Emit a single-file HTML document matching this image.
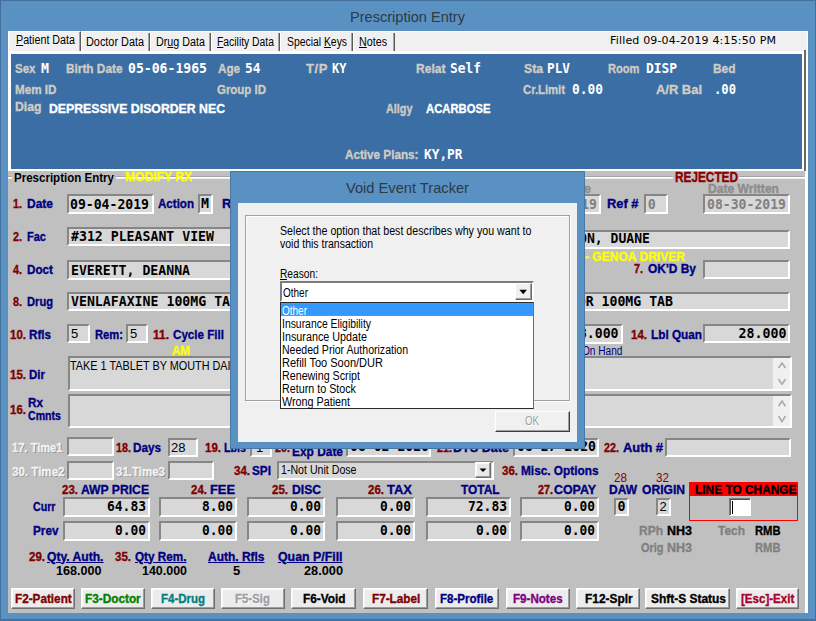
<!DOCTYPE html>
<html><head><meta charset="utf-8"><title>Prescription Entry</title>
<style>
html,body{margin:0;padding:0;}
body{width:816px;height:621px;overflow:hidden;background:#5a91c3;}
#win{position:relative;width:816px;height:621px;overflow:hidden;background:#5a91c3;}
#win div,#win span{position:absolute;box-sizing:border-box;white-space:pre;}
.fld{background:#d8d8d8;border:2px solid;border-color:#868686 #fff #fff #868686;}
.btn{background:#ececec;border:1px solid;border-color:#fff #707070 #707070 #fff;box-shadow:inset -1px -1px 0 #9c9c9c, inset 1px 1px 0 #fafafa;}
u{text-decoration:underline;}

</style></head><body>
<div id="win">
<div class="" style="left:0px;top:0px;width:816px;height:621px;border:solid #44719c;border-width:1px 1px 2px 1px;background:#5a91c3;"></div>
<div class="" style="left:8px;top:30.6px;width:800px;height:582px;background:#c0c0c0;"></div>
<div class="" style="left:804.8px;top:31px;width:3.4px;height:582px;background:#fff;"></div>
<div class="" style="left:8px;top:30.6px;width:800px;height:23.6px;background:#f0f0f0;border-top:1px solid #fff;border-left:1.3px solid #fff;border-right:1px solid #fff;"></div>
<div class="" style="left:8px;top:51px;width:797.8px;height:3.2px;background:#fff;"></div>
<div class="" style="left:8px;top:31px;width:73px;height:20px;background:#f0f0f0;border-left:1px solid #fff;border-top:1px solid #fff;border-right:1px solid #5a5a5a;box-shadow:inset -1px 0 0 #a4a4a4;"></div>
<div class="" style="left:81px;top:33px;width:69px;height:17.5px;border-right:1px solid #5a5a5a;box-shadow:inset -1px 0 0 #a4a4a4;border-left:1px solid #fff;"></div>
<div class="" style="left:150px;top:33px;width:61px;height:17.5px;border-right:1px solid #5a5a5a;box-shadow:inset -1px 0 0 #a4a4a4;border-left:1px solid #fff;"></div>
<div class="" style="left:211px;top:33px;width:69px;height:17.5px;border-right:1px solid #5a5a5a;box-shadow:inset -1px 0 0 #a4a4a4;border-left:1px solid #fff;"></div>
<div class="" style="left:280px;top:33px;width:73px;height:17.5px;border-right:1px solid #5a5a5a;box-shadow:inset -1px 0 0 #a4a4a4;border-left:1px solid #fff;"></div>
<div class="" style="left:353px;top:33px;width:42px;height:17.5px;border-right:1px solid #5a5a5a;box-shadow:inset -1px 0 0 #a4a4a4;border-left:1px solid #fff;"></div>
<div class="" style="left:8px;top:54.2px;width:796.4px;height:116.8px;background:#fff;"></div>
<div class="" style="left:11.3px;top:54.2px;width:790.8px;height:114.5px;background:#3a6ea5;"></div>
<div class="" style="left:804.4px;top:50px;width:1.4px;height:121px;background:#696969;"></div>
<div class="" style="left:8px;top:176px;width:796.4px;height:1px;background:#a4a4a4;"></div>
<div class="" style="left:8px;top:177px;width:797.5px;height:1px;background:#fff;"></div>
<div class="" style="left:8px;top:178px;width:797.5px;height:1px;background:rgba(255,255,255,0.7);"></div>
<div class="" style="left:12px;top:175px;width:104px;height:5px;background:#c0c0c0;"></div>
<div class="" style="left:673px;top:175px;width:66px;height:5px;background:#c0c0c0;"></div>
<div class="fld" style="left:67px;top:194px;width:87px;height:19.5px;"></div>
<div class="fld" style="left:198px;top:194px;width:15px;height:19.5px;"></div>
<div class="fld" style="left:520px;top:194px;width:80.5px;height:20.0px;"></div>
<div class="fld" style="left:644.4px;top:194px;width:23.200000000000045px;height:20.0px;"></div>
<div class="fld" style="left:703px;top:194px;width:87px;height:19.5px;"></div>
<div class="fld" style="left:67px;top:227px;width:473px;height:19.0px;"></div>
<div class="fld" style="left:480px;top:229.5px;width:310px;height:19.0px;"></div>
<div class="fld" style="left:67px;top:260px;width:473px;height:19.5px;"></div>
<div class="fld" style="left:703px;top:260px;width:87px;height:18.5px;"></div>
<div class="fld" style="left:67px;top:292px;width:473px;height:18.5px;"></div>
<div class="fld" style="left:480px;top:292px;width:310px;height:19.0px;"></div>
<div class="fld" style="left:67px;top:323.5px;width:23px;height:19.5px;"></div>
<div class="fld" style="left:126px;top:323.5px;width:22px;height:19.5px;"></div>
<div class="fld" style="left:540px;top:323.8px;width:82.5px;height:20.0px;"></div>
<div class="fld" style="left:703px;top:323.5px;width:87px;height:19.5px;"></div>
<div class="fld" style="left:67.5px;top:356.3px;width:724.3px;height:34.69999999999999px;"></div>
<div class="" style="left:773px;top:358.3px;width:17px;height:30.9px;background:#f0f0f0;"></div>
<div class="fld" style="left:67.5px;top:394.3px;width:724.3px;height:33.69999999999999px;"></div>
<div class="" style="left:773px;top:396.3px;width:17px;height:29.9px;background:#f0f0f0;"></div>
<div class="" style="left:777.6px;top:362.1px;width:8.0px;height:7.099999999999966px;"><svg width="8.0" height="7.099999999999966" viewBox="0 0 8.0 7.099999999999966" style="position:absolute;left:0;top:0"><polyline points="0.5,6.099999999999966 4.0,1.0 7.5,6.099999999999966" fill="none" stroke="#adadad" stroke-width="1.7"/></svg></div>
<div class="" style="left:777.6px;top:378px;width:8.0px;height:7.399999999999977px;"><svg width="8.0" height="7.399999999999977" viewBox="0 0 8.0 7.399999999999977" style="position:absolute;left:0;top:0"><polyline points="0.5,1 4.0,6.399999999999977 7.5,1" fill="none" stroke="#adadad" stroke-width="1.7"/></svg></div>
<div class="" style="left:777.6px;top:400.2px;width:8.0px;height:7.400000000000034px;"><svg width="8.0" height="7.400000000000034" viewBox="0 0 8.0 7.400000000000034" style="position:absolute;left:0;top:0"><polyline points="0.5,6.400000000000034 4.0,1.0 7.5,6.400000000000034" fill="none" stroke="#adadad" stroke-width="1.7"/></svg></div>
<div class="" style="left:777.6px;top:415px;width:8.0px;height:7.5px;"><svg width="8.0" height="7.5" viewBox="0 0 8.0 7.5" style="position:absolute;left:0;top:0"><polyline points="0.5,1 4.0,6.5 7.5,1" fill="none" stroke="#adadad" stroke-width="1.7"/></svg></div>
<div class="fld" style="left:67px;top:437.3px;width:47px;height:19.19999999999999px;"></div>
<div class="fld" style="left:167.5px;top:438px;width:30.0px;height:19.0px;"></div>
<div class="fld" style="left:250px;top:438px;width:22px;height:19.0px;"></div>
<div class="fld" style="left:346px;top:438px;width:85px;height:19.0px;"></div>
<div class="fld" style="left:513px;top:438px;width:85.5px;height:19.0px;"></div>
<div class="fld" style="left:665px;top:438px;width:126px;height:19.0px;"></div>
<div class="fld" style="left:67px;top:460.7px;width:47px;height:19.30000000000001px;"></div>
<div class="fld" style="left:167.5px;top:460.7px;width:46.5px;height:19.30000000000001px;"></div>
<div class="fld" style="left:277px;top:460.5px;width:216.5px;height:19.5px;"></div>
<div class="btn" style="left:475px;top:462px;width:16px;height:16px;background:#e8e8e8;"><svg width="14" height="14" viewBox="0 0 14 14" style="position:absolute;left:0;top:0"><polygon points="3.5,5.5 10.5,5.5 7,9" fill="#000"/></svg></div>
<div class="fld" style="left:63px;top:497px;width:86.5px;height:19.5px;"></div>
<div class="fld" style="left:63px;top:521px;width:86.5px;height:19.5px;"></div>
<div class="fld" style="left:159px;top:497px;width:78px;height:19.5px;"></div>
<div class="fld" style="left:159px;top:521px;width:78px;height:19.5px;"></div>
<div class="fld" style="left:246.5px;top:497px;width:78.5px;height:19.5px;"></div>
<div class="fld" style="left:246.5px;top:521px;width:78.5px;height:19.5px;"></div>
<div class="fld" style="left:336px;top:497px;width:79px;height:19.5px;"></div>
<div class="fld" style="left:336px;top:521px;width:79px;height:19.5px;"></div>
<div class="fld" style="left:426px;top:497px;width:85px;height:19.5px;"></div>
<div class="fld" style="left:426px;top:521px;width:85px;height:19.5px;"></div>
<div class="fld" style="left:520px;top:497px;width:78.5px;height:19.5px;"></div>
<div class="fld" style="left:520px;top:521px;width:78.5px;height:19.5px;"></div>
<div class="fld" style="left:614px;top:497.5px;width:15px;height:18.5px;"></div>
<div class="fld" style="left:656px;top:497.5px;width:15px;height:18.5px;"></div>
<div class="" style="left:689px;top:482px;width:109px;height:38.5px;background:#c0c0c0;border:1px solid #ff0000;"></div>
<div class="" style="left:689px;top:482px;width:109px;height:13.5px;background:#ff0000;"></div>
<div class="" style="left:729px;top:498px;width:21.5px;height:18px;background:#fff;border:1px solid;border-color:#7a7a7a #fff #fff #7a7a7a;box-shadow:inset 1px 1px 0 #555;"></div>
<div class="" style="left:732px;top:501px;width:1px;height:13px;background:#000;"></div>
<div class="btn" style="left:10.9px;top:588px;width:64.4px;height:20.7px;"></div>
<div class="btn" style="left:80.9px;top:588px;width:64.4px;height:20.7px;"></div>
<div class="btn" style="left:151.1px;top:588px;width:63.70000000000001px;height:20.7px;"></div>
<div class="btn" style="left:221.1px;top:588px;width:64.4px;height:20.7px;"></div>
<div class="btn" style="left:291.4px;top:588px;width:64.70000000000002px;height:20.7px;"></div>
<div class="btn" style="left:362.9px;top:588px;width:64.9px;height:20.7px;"></div>
<div class="btn" style="left:434.7px;top:588px;width:64.1px;height:20.7px;"></div>
<div class="btn" style="left:506.09999999999997px;top:588px;width:63.70000000000001px;height:20.7px;"></div>
<div class="btn" style="left:576.1px;top:588px;width:64.4px;height:20.7px;"></div>
<div class="btn" style="left:645.1px;top:588px;width:85.4px;height:20.7px;"></div>
<div class="btn" style="left:736.1px;top:588px;width:63.4px;height:20.7px;"></div>
<div class="" style="left:230px;top:171px;width:355px;height:277.5px;z-index:10;background:#5a91c3;border:1px solid #4a78a6;"></div>
<div class="" style="left:238px;top:203px;width:339px;height:238.5px;z-index:10;background:#f0f0f0;"></div>
<div class="" style="left:244.5px;top:214.5px;width:325.5px;height:186.5px;z-index:10;border:1px solid #a0a0a0;box-shadow:1px 1px 0 #fff, inset 1px 1px 0 #fff;"></div>
<div class="" style="left:279.5px;top:279px;width:7px;height:1px;z-index:10;background:#000;"></div>
<div class="" style="left:279.5px;top:281.4px;width:254.2px;height:20.6px;z-index:10;background:#fff;border:2px solid;border-color:#7c7c7c #fff #fff #7c7c7c;"></div>
<div class="" style="left:515.1px;top:283.4px;width:16.6px;height:16.9px;z-index:10;background:#f0f0f0;border:1px solid;border-color:#fff #696969 #696969 #fff;box-shadow:inset -1px -1px 0 #a0a0a0;"><svg width="15" height="15" viewBox="0 0 15 15" style="position:absolute;left:0;top:0"><polygon points="3.4,5.8 11.0,5.8 7.2,10.3" fill="#000"/></svg></div>
<div class="" style="left:279.5px;top:302.2px;width:254.7px;height:107px;z-index:10;background:#fff;border:1px solid;border-color:#2a2a2a #6e6e6e #2a2a2a #2a2a2a;"></div>
<div class="" style="left:280.5px;top:303px;width:252.2px;height:12.8px;z-index:10;background:#3399ff;border:1px dotted #d08040;"></div>
<div class="" style="left:495px;top:410.5px;width:74.5px;height:21.5px;z-index:10;background:#f0f0f0;border:1px solid;border-color:#fff #404040 #404040 #fff;box-shadow:inset -1px -1px 0 #a0a0a0;"></div>
<span style="left:350px;top:6.5px;font:normal 15px/19px 'Liberation Sans', sans-serif;color:#2c3946;transform:scaleX(0.9715);transform-origin:0 0;">Prescription Entry</span>
<span style="left:15.5px;top:31.5px;font:normal 12px/16px 'Liberation Sans', sans-serif;color:#000;transform:scaleX(0.8933);transform-origin:0 0;"><u>P</u>atient Data</span>
<span style="left:86px;top:33.5px;font:normal 12px/16px 'Liberation Sans', sans-serif;color:#000;transform:scaleX(0.9058);transform-origin:0 0;">Doctor Data</span>
<span style="left:156px;top:33.5px;font:normal 12px/16px 'Liberation Sans', sans-serif;color:#000;transform:scaleX(0.8957);transform-origin:0 0;">Dr<u>u</u>g Data</span>
<span style="left:217px;top:33.5px;font:normal 12px/16px 'Liberation Sans', sans-serif;color:#000;transform:scaleX(0.8632);transform-origin:0 0;"><u>F</u>acility Data</span>
<span style="left:287px;top:33.5px;font:normal 12px/16px 'Liberation Sans', sans-serif;color:#000;transform:scaleX(0.8649);transform-origin:0 0;">Special <u>K</u>eys</span>
<span style="left:359px;top:33.5px;font:normal 12px/16px 'Liberation Sans', sans-serif;color:#000;transform:scaleX(0.8929);transform-origin:0 0;"><u>N</u>otes</span>
<span style="left:610px;top:33.0px;font:normal 11px/15px 'DejaVu Sans', 'Liberation Sans', sans-serif;color:#000;letter-spacing:0.17px;">Filled 09-04-2019 4:15:50 PM</span>
<span style="left:14.5px;top:59.5px;font:bold 13px/17px 'Liberation Sans', sans-serif;color:#d0ccc4;transform:scaleX(0.8859);transform-origin:0 0;-webkit-text-stroke:0.35px;">Sex</span>
<span style="left:41px;top:59.5px;font:bold 13.29px/17px 'DejaVu Sans Mono', 'Liberation Mono', monospace;color:#fff;">M</span>
<span style="left:66px;top:59.5px;font:bold 13px/17px 'Liberation Sans', sans-serif;color:#d0ccc4;transform:scaleX(0.9095);transform-origin:0 0;-webkit-text-stroke:0.35px;">Birth Date</span>
<span style="left:128px;top:59.5px;font:bold 13.29px/17px 'DejaVu Sans Mono', 'Liberation Mono', monospace;color:#fff;transform:scaleX(0.9879);transform-origin:0 0;">05-06-1965</span>
<span style="left:218px;top:59.5px;font:bold 13px/17px 'Liberation Sans', sans-serif;color:#d0ccc4;transform:scaleX(0.8957);transform-origin:0 0;-webkit-text-stroke:0.35px;">Age</span>
<span style="left:244.5px;top:59.5px;font:bold 13.29px/17px 'DejaVu Sans Mono', 'Liberation Mono', monospace;color:#fff;transform:scaleX(0.9688);transform-origin:0 0;">54</span>
<span style="left:306px;top:59.5px;font:bold 13px/17px 'Liberation Sans', sans-serif;color:#d0ccc4;letter-spacing:0.63px;-webkit-text-stroke:0.35px;">T/P</span>
<span style="left:332px;top:59.5px;font:bold 13.29px/17px 'DejaVu Sans Mono', 'Liberation Mono', monospace;color:#fff;transform:scaleX(0.9062);transform-origin:0 0;">KY</span>
<span style="left:415.5px;top:59.5px;font:bold 13px/17px 'Liberation Sans', sans-serif;color:#d0ccc4;transform:scaleX(0.9278);transform-origin:0 0;-webkit-text-stroke:0.35px;">Relat</span>
<span style="left:449.5px;top:59.5px;font:bold 13.29px/17px 'DejaVu Sans Mono', 'Liberation Mono', monospace;color:#fff;transform:scaleX(0.9692);transform-origin:0 0;">Self</span>
<span style="left:524px;top:59.5px;font:bold 13px/17px 'Liberation Sans', sans-serif;color:#d0ccc4;transform:scaleX(0.9390);transform-origin:0 0;-webkit-text-stroke:0.35px;">Sta</span>
<span style="left:547px;top:59.5px;font:bold 13.29px/17px 'DejaVu Sans Mono', 'Liberation Mono', monospace;color:#fff;transform:scaleX(0.9583);transform-origin:0 0;">PLV</span>
<span style="left:608px;top:59.5px;font:bold 13px/17px 'Liberation Sans', sans-serif;color:#d0ccc4;transform:scaleX(0.8550);transform-origin:0 0;-webkit-text-stroke:0.35px;">Room</span>
<span style="left:645.5px;top:59.5px;font:bold 13.29px/17px 'DejaVu Sans Mono', 'Liberation Mono', monospace;color:#fff;transform:scaleX(0.9692);transform-origin:0 0;">DISP</span>
<span style="left:712.5px;top:59.5px;font:bold 13px/17px 'Liberation Sans', sans-serif;color:#d0ccc4;transform:scaleX(0.9160);transform-origin:0 0;-webkit-text-stroke:0.35px;">Bed</span>
<span style="left:14.5px;top:80.5px;font:bold 13px/17px 'Liberation Sans', sans-serif;color:#d0ccc4;transform:scaleX(0.8976);transform-origin:0 0;-webkit-text-stroke:0.35px;">Mem ID</span>
<span style="left:217px;top:80.5px;font:bold 13px/17px 'Liberation Sans', sans-serif;color:#d0ccc4;transform:scaleX(0.8811);transform-origin:0 0;-webkit-text-stroke:0.35px;">Group ID</span>
<span style="left:523px;top:80.5px;font:bold 13px/17px 'Liberation Sans', sans-serif;color:#d0ccc4;transform:scaleX(0.8677);transform-origin:0 0;-webkit-text-stroke:0.35px;">Cr.Limit</span>
<span style="left:572px;top:80.5px;font:bold 13.29px/17px 'DejaVu Sans Mono', 'Liberation Mono', monospace;color:#fff;transform:scaleX(0.9692);transform-origin:0 0;">0.00</span>
<span style="left:656px;top:80.5px;font:bold 13px/17px 'Liberation Sans', sans-serif;color:#d0ccc4;transform:scaleX(0.9949);transform-origin:0 0;-webkit-text-stroke:0.35px;">A/R Bal</span>
<span style="left:714px;top:80.5px;font:bold 13.29px/17px 'DejaVu Sans Mono', 'Liberation Mono', monospace;color:#fff;transform:scaleX(0.9167);transform-origin:0 0;">.00</span>
<span style="left:14.5px;top:98.1px;font:bold 13px/17px 'Liberation Sans', sans-serif;color:#d0ccc4;transform:scaleX(0.9407);transform-origin:0 0;-webkit-text-stroke:0.35px;">Diag</span>
<span style="left:49px;top:99.5px;font:bold 13px/17px 'Liberation Sans', sans-serif;color:#fff;transform:scaleX(0.9443);transform-origin:0 0;-webkit-text-stroke:0.35px;">DEPRESSIVE DISORDER NEC</span>
<span style="left:386px;top:99.5px;font:bold 13px/17px 'Liberation Sans', sans-serif;color:#d0ccc4;transform:scaleX(0.8334);transform-origin:0 0;-webkit-text-stroke:0.35px;">Allgy</span>
<span style="left:426px;top:99.5px;font:bold 13px/17px 'Liberation Sans', sans-serif;color:#fff;transform:scaleX(0.8669);transform-origin:0 0;-webkit-text-stroke:0.35px;">ACARBOSE</span>
<span style="left:344.5px;top:146.0px;font:bold 13px/17px 'Liberation Sans', sans-serif;color:#d0ccc4;transform:scaleX(0.9001);transform-origin:0 0;-webkit-text-stroke:0.35px;">Active Plans:</span>
<span style="left:424px;top:146.0px;font:bold 13.29px/17px 'DejaVu Sans Mono', 'Liberation Mono', monospace;color:#fff;transform:scaleX(0.9629);transform-origin:0 0;">KY,PR</span>
<span style="left:14px;top:169.0px;font:bold 13px/17px 'Liberation Sans', sans-serif;color:#000;transform:scaleX(0.8873);transform-origin:0 0;-webkit-text-stroke:0.35px;-webkit-text-stroke:0;">Prescription Entry</span>
<span style="left:125px;top:167.5px;font:bold 13px/17px 'Liberation Sans', sans-serif;color:#ffff00;transform:scaleX(0.9306);transform-origin:0 0;-webkit-text-stroke:0.35px;">MODIFY RX</span>
<span style="left:674.5px;top:168.3px;font:bold 14px/18px 'Liberation Sans', sans-serif;color:#8b0000;transform:scaleX(0.8435);transform-origin:0 0;-webkit-text-stroke:0.35px;">REJECTED</span>
<span style="left:13px;top:194.5px;font:bold 13px/17px 'Liberation Sans', sans-serif;color:#800000;transform:scaleX(0.8300);transform-origin:0 0;-webkit-text-stroke:0.35px;">1.</span>
<span style="left:27px;top:194.5px;font:bold 13px/17px 'Liberation Sans', sans-serif;color:#000080;transform:scaleX(0.9224);transform-origin:0 0;-webkit-text-stroke:0.35px;">Date</span>
<span style="left:70.3px;top:195.5px;font:bold 13.29px/17px 'DejaVu Sans Mono', 'Liberation Mono', monospace;color:#000;transform:scaleX(0.9879);transform-origin:0 0;">09-04-2019</span>
<span style="left:158px;top:194.5px;font:bold 13px/17px 'Liberation Sans', sans-serif;color:#000080;transform:scaleX(0.8899);transform-origin:0 0;-webkit-text-stroke:0.35px;">Action</span>
<span style="left:201px;top:195.0px;font:bold 13.29px/17px 'DejaVu Sans Mono', 'Liberation Mono', monospace;color:#000;">M</span>
<span style="left:222px;top:194.5px;font:bold 13px/17px 'Liberation Sans', sans-serif;color:#000080;letter-spacing:0.84px;-webkit-text-stroke:0.35px;">Rx #</span>
<span style="left:536px;top:180.0px;font:bold 13px/17px 'Liberation Sans', sans-serif;color:#8c8c8c;letter-spacing:0.55px;-webkit-text-stroke:0.35px;">Fill Date</span>
<span style="left:517.7px;top:195.5px;font:bold 13.29px/17px 'DejaVu Sans Mono', 'Liberation Mono', monospace;color:#808080;transform:scaleX(0.9879);transform-origin:0 0;">09-04-2019</span>
<span style="left:607px;top:195.0px;font:bold 13px/17px 'Liberation Sans', sans-serif;color:#000080;transform:scaleX(0.9907);transform-origin:0 0;-webkit-text-stroke:0.35px;">Ref #</span>
<span style="left:647.7px;top:195.5px;font:bold 13.29px/17px 'DejaVu Sans Mono', 'Liberation Mono', monospace;color:#808080;">0</span>
<span style="left:708px;top:180.0px;font:bold 13px/17px 'Liberation Sans', sans-serif;color:#8c8c8c;transform:scaleX(0.9302);transform-origin:0 0;-webkit-text-stroke:0.35px;">Date Written</span>
<span style="left:706.7px;top:195.5px;font:bold 13.29px/17px 'DejaVu Sans Mono', 'Liberation Mono', monospace;color:#808080;transform:scaleX(0.9879);transform-origin:0 0;">08-30-2019</span>
<span style="left:13px;top:227.5px;font:bold 13px/17px 'Liberation Sans', sans-serif;color:#800000;transform:scaleX(0.8300);transform-origin:0 0;-webkit-text-stroke:0.35px;">2.</span>
<span style="left:27px;top:227.5px;font:bold 13px/17px 'Liberation Sans', sans-serif;color:#000080;transform:scaleX(0.8480);transform-origin:0 0;-webkit-text-stroke:0.35px;">Fac</span>
<span style="left:70.5px;top:227.5px;font:bold 13.29px/17px 'DejaVu Sans Mono', 'Liberation Mono', monospace;color:#000;transform:scaleX(0.9935);transform-origin:0 0;">#312 PLEASANT VIEW</span>
<span style="left:579px;top:230.1px;font:bold 13.29px/17px 'DejaVu Sans Mono', 'Liberation Mono', monospace;color:#000;transform:scaleX(0.9865);transform-origin:0 0;">ON, DUANE</span>
<span style="left:585px;top:247.5px;font:bold 13px/17px 'Liberation Sans', sans-serif;color:#ffff00;transform:scaleX(0.9271);transform-origin:0 0;-webkit-text-stroke:0.35px;">- GENOA DRIVER</span>
<span style="left:13px;top:260.5px;font:bold 13px/17px 'Liberation Sans', sans-serif;color:#800000;transform:scaleX(0.8300);transform-origin:0 0;-webkit-text-stroke:0.35px;">4.</span>
<span style="left:27px;top:260.5px;font:bold 13px/17px 'Liberation Sans', sans-serif;color:#000080;transform:scaleX(0.8999);transform-origin:0 0;-webkit-text-stroke:0.35px;">Doct</span>
<span style="left:71px;top:261.5px;font:bold 13.29px/17px 'DejaVu Sans Mono', 'Liberation Mono', monospace;color:#000;transform:scaleX(0.9921);transform-origin:0 0;">EVERETT, DEANNA</span>
<span style="left:634px;top:260.0px;font:bold 13px/17px 'Liberation Sans', sans-serif;color:#800000;transform:scaleX(0.8300);transform-origin:0 0;-webkit-text-stroke:0.35px;">7.</span>
<span style="left:648px;top:260.0px;font:bold 13px/17px 'Liberation Sans', sans-serif;color:#000080;transform:scaleX(0.9192);transform-origin:0 0;-webkit-text-stroke:0.35px;">OK&#x27;D By</span>
<span style="left:13px;top:292.5px;font:bold 13px/17px 'Liberation Sans', sans-serif;color:#800000;transform:scaleX(0.8300);transform-origin:0 0;-webkit-text-stroke:0.35px;">8.</span>
<span style="left:27px;top:292.5px;font:bold 13px/17px 'Liberation Sans', sans-serif;color:#000080;transform:scaleX(0.8568);transform-origin:0 0;-webkit-text-stroke:0.35px;">Drug</span>
<span style="left:70.5px;top:292.5px;font:bold 13.29px/17px 'DejaVu Sans Mono', 'Liberation Mono', monospace;color:#000;transform:scaleX(0.9945);transform-origin:0 0;">VENLAFAXINE 100MG TAB</span>
<span style="left:538px;top:292.5px;font:bold 13.29px/17px 'DejaVu Sans Mono', 'Liberation Mono', monospace;color:#000;transform:scaleX(0.9931);transform-origin:0 0;">EFFEXOR 100MG TAB</span>
<span style="left:10px;top:325.5px;font:bold 13px/17px 'Liberation Sans', sans-serif;color:#800000;transform:scaleX(0.8850);transform-origin:0 0;-webkit-text-stroke:0.35px;">10.</span>
<span style="left:29px;top:325.5px;font:bold 13px/17px 'Liberation Sans', sans-serif;color:#000080;transform:scaleX(0.8957);transform-origin:0 0;-webkit-text-stroke:0.35px;">Rfls</span>
<span style="left:71px;top:324.5px;font:normal 13px/17px 'Liberation Sans', sans-serif;color:#000;">5</span>
<span style="left:95px;top:325.5px;font:bold 13px/17px 'Liberation Sans', sans-serif;color:#000080;transform:scaleX(0.8611);transform-origin:0 0;-webkit-text-stroke:0.35px;">Rem:</span>
<span style="left:130px;top:324.5px;font:normal 13px/17px 'Liberation Sans', sans-serif;color:#000;">5</span>
<span style="left:153px;top:325.5px;font:bold 13px/17px 'Liberation Sans', sans-serif;color:#800000;transform:scaleX(0.9217);transform-origin:0 0;-webkit-text-stroke:0.35px;">11.</span>
<span style="left:173px;top:325.5px;font:bold 13px/17px 'Liberation Sans', sans-serif;color:#000080;transform:scaleX(0.8935);transform-origin:0 0;-webkit-text-stroke:0.35px;">Cycle Fill</span>
<span style="left:172px;top:341.5px;font:bold 13px/17px 'Liberation Sans', sans-serif;color:#ffff00;transform:scaleX(0.8903);transform-origin:0 0;-webkit-text-stroke:0.35px;">AM</span>
<span style="left:570.5px;top:324.5px;font:bold 13.29px/17px 'DejaVu Sans Mono', 'Liberation Mono', monospace;color:#000;transform:scaleX(0.9899);transform-origin:0 0;">28.000</span>
<span style="left:631px;top:326.0px;font:bold 13px/17px 'Liberation Sans', sans-serif;color:#800000;transform:scaleX(0.8850);transform-origin:0 0;-webkit-text-stroke:0.35px;">14.</span>
<span style="left:651px;top:326.0px;font:bold 13px/17px 'Liberation Sans', sans-serif;color:#000080;transform:scaleX(0.9052);transform-origin:0 0;-webkit-text-stroke:0.35px;">Lbl Quan</span>
<span style="left:738.5px;top:325.0px;font:bold 13.29px/17px 'DejaVu Sans Mono', 'Liberation Mono', monospace;color:#000;letter-spacing:0.0px;">28.000</span>
<span style="left:582px;top:342.5px;font:normal 12px/16px 'Liberation Sans', sans-serif;color:#000080;transform:scaleX(0.8432);transform-origin:0 0;">On Hand</span>
<span style="left:10px;top:365.5px;font:bold 13px/17px 'Liberation Sans', sans-serif;color:#800000;transform:scaleX(0.8850);transform-origin:0 0;-webkit-text-stroke:0.35px;">15.</span>
<span style="left:29px;top:365.5px;font:bold 13px/17px 'Liberation Sans', sans-serif;color:#000080;transform:scaleX(0.8858);transform-origin:0 0;-webkit-text-stroke:0.35px;">Dir</span>
<span style="left:70.3px;top:357.5px;font:normal 12px/16px 'Liberation Sans', sans-serif;color:#000;transform:scaleX(0.9043);transform-origin:0 0;">TAKE 1 TABLET BY MOUTH DAILY</span>
<span style="left:10px;top:400.5px;font:bold 13px/17px 'Liberation Sans', sans-serif;color:#800000;transform:scaleX(0.8850);transform-origin:0 0;-webkit-text-stroke:0.35px;">16.</span>
<span style="left:28px;top:393.5px;font:bold 13px/17px 'Liberation Sans', sans-serif;color:#000080;transform:scaleX(0.9023);transform-origin:0 0;-webkit-text-stroke:0.35px;">Rx</span>
<span style="left:28px;top:406.5px;font:bold 13px/17px 'Liberation Sans', sans-serif;color:#000080;transform:scaleX(0.8158);transform-origin:0 0;-webkit-text-stroke:0.35px;">Cmnts</span>
<span style="left:11.8px;top:438.9px;font:bold 13px/17px 'Liberation Sans', sans-serif;color:#f2f2f2;transform:scaleX(0.8555);transform-origin:0 0;-webkit-text-stroke:0.35px;text-shadow:1px 1px 0 #8c8c8c;">17. Time1</span>
<span style="left:116px;top:438.5px;font:bold 13px/17px 'Liberation Sans', sans-serif;color:#800000;transform:scaleX(0.8297);transform-origin:0 0;-webkit-text-stroke:0.35px;">18.</span>
<span style="left:133px;top:438.5px;font:bold 13px/17px 'Liberation Sans', sans-serif;color:#000080;transform:scaleX(0.9010);transform-origin:0 0;-webkit-text-stroke:0.35px;">Days</span>
<span style="left:171px;top:438.5px;font:normal 13px/17px 'Liberation Sans', sans-serif;color:#000;">28</span>
<span style="left:204.5px;top:438.5px;font:bold 13px/17px 'Liberation Sans', sans-serif;color:#800000;transform:scaleX(0.8850);transform-origin:0 0;-webkit-text-stroke:0.35px;">19.</span>
<span style="left:224px;top:438.5px;font:bold 13px/17px 'Liberation Sans', sans-serif;color:#000080;transform:scaleX(0.8229);transform-origin:0 0;-webkit-text-stroke:0.35px;">Lbls</span>
<span style="left:256px;top:438.5px;font:normal 13px/17px 'Liberation Sans', sans-serif;color:#000;">1</span>
<span style="left:275px;top:438.5px;font:bold 13px/17px 'Liberation Sans', sans-serif;color:#800000;transform:scaleX(0.8297);transform-origin:0 0;-webkit-text-stroke:0.35px;">20.</span>
<span style="left:292px;top:443.0px;font:bold 13px/17px 'Liberation Sans', sans-serif;color:#000080;transform:scaleX(0.9166);transform-origin:0 0;-webkit-text-stroke:0.35px;">Exp Date</span>
<span style="left:349.5px;top:438.2px;font:bold 13.29px/17px 'DejaVu Sans Mono', 'Liberation Mono', monospace;color:#000;transform:scaleX(0.9879);transform-origin:0 0;">08-02-2020</span>
<span style="left:437px;top:438.5px;font:bold 13px/17px 'Liberation Sans', sans-serif;color:#800000;transform:scaleX(0.8297);transform-origin:0 0;-webkit-text-stroke:0.35px;">21.</span>
<span style="left:453px;top:438.5px;font:bold 13px/17px 'Liberation Sans', sans-serif;color:#000080;transform:scaleX(0.9689);transform-origin:0 0;-webkit-text-stroke:0.35px;">DTS Date</span>
<span style="left:516.7px;top:438.2px;font:bold 13.29px/17px 'DejaVu Sans Mono', 'Liberation Mono', monospace;color:#000;transform:scaleX(0.9879);transform-origin:0 0;">08-27-2020</span>
<span style="left:604px;top:438.5px;font:bold 13px/17px 'Liberation Sans', sans-serif;color:#800000;transform:scaleX(0.8297);transform-origin:0 0;-webkit-text-stroke:0.35px;">22.</span>
<span style="left:623px;top:438.5px;font:bold 13px/17px 'Liberation Sans', sans-serif;color:#000080;transform:scaleX(0.9888);transform-origin:0 0;-webkit-text-stroke:0.35px;">Auth #</span>
<span style="left:11.8px;top:462.5px;font:bold 13px/17px 'Liberation Sans', sans-serif;color:#f2f2f2;transform:scaleX(0.8894);transform-origin:0 0;-webkit-text-stroke:0.35px;text-shadow:1px 1px 0 #8c8c8c;">30. Time2</span>
<span style="left:116px;top:462.5px;font:bold 13px/17px 'Liberation Sans', sans-serif;color:#f2f2f2;transform:scaleX(0.8841);transform-origin:0 0;-webkit-text-stroke:0.35px;text-shadow:1px 1px 0 #8c8c8c;">31.Time3</span>
<span style="left:234px;top:461.5px;font:bold 13px/17px 'Liberation Sans', sans-serif;color:#800000;transform:scaleX(0.8850);transform-origin:0 0;-webkit-text-stroke:0.35px;">34.</span>
<span style="left:252px;top:461.5px;font:bold 13px/17px 'Liberation Sans', sans-serif;color:#000080;transform:scaleX(0.9061);transform-origin:0 0;-webkit-text-stroke:0.35px;">SPI</span>
<span style="left:281px;top:462.0px;font:normal 12px/16px 'Liberation Sans', sans-serif;color:#000;transform:scaleX(0.8843);transform-origin:0 0;">1-Not Unit Dose</span>
<span style="left:501.5px;top:461.5px;font:bold 13px/17px 'Liberation Sans', sans-serif;color:#800000;transform:scaleX(0.8850);transform-origin:0 0;-webkit-text-stroke:0.35px;">36.</span>
<span style="left:521px;top:461.5px;font:bold 13px/17px 'Liberation Sans', sans-serif;color:#000080;transform:scaleX(0.9093);transform-origin:0 0;-webkit-text-stroke:0.35px;">Misc. Options</span>
<span style="left:62px;top:480.9px;font:bold 13px/17px 'Liberation Sans', sans-serif;color:#800000;transform:scaleX(0.8850);transform-origin:0 0;-webkit-text-stroke:0.35px;">23.</span>
<span style="left:81px;top:480.9px;font:bold 13px/17px 'Liberation Sans', sans-serif;color:#000080;transform:scaleX(0.9351);transform-origin:0 0;-webkit-text-stroke:0.35px;">AWP PRICE</span>
<span style="left:191px;top:480.9px;font:bold 13px/17px 'Liberation Sans', sans-serif;color:#800000;transform:scaleX(0.8850);transform-origin:0 0;-webkit-text-stroke:0.35px;">24.</span>
<span style="left:210px;top:480.9px;font:bold 13px/17px 'Liberation Sans', sans-serif;color:#000080;transform:scaleX(0.9883);transform-origin:0 0;-webkit-text-stroke:0.35px;">FEE</span>
<span style="left:272px;top:480.9px;font:bold 13px/17px 'Liberation Sans', sans-serif;color:#800000;transform:scaleX(0.8850);transform-origin:0 0;-webkit-text-stroke:0.35px;">25.</span>
<span style="left:292px;top:480.9px;font:bold 13px/17px 'Liberation Sans', sans-serif;color:#000080;transform:scaleX(0.9336);transform-origin:0 0;-webkit-text-stroke:0.35px;">DISC</span>
<span style="left:367.5px;top:480.9px;font:bold 13px/17px 'Liberation Sans', sans-serif;color:#800000;transform:scaleX(0.8850);transform-origin:0 0;-webkit-text-stroke:0.35px;">26.</span>
<span style="left:387px;top:480.9px;font:bold 13px/17px 'Liberation Sans', sans-serif;color:#000080;transform:scaleX(0.9981);transform-origin:0 0;-webkit-text-stroke:0.35px;">TAX</span>
<span style="left:461px;top:480.9px;font:bold 13px/17px 'Liberation Sans', sans-serif;color:#000080;transform:scaleX(0.9139);transform-origin:0 0;-webkit-text-stroke:0.35px;">TOTAL</span>
<span style="left:538px;top:480.9px;font:bold 13px/17px 'Liberation Sans', sans-serif;color:#800000;transform:scaleX(0.8297);transform-origin:0 0;-webkit-text-stroke:0.35px;">27.</span>
<span style="left:554px;top:480.9px;font:bold 13px/17px 'Liberation Sans', sans-serif;color:#000080;transform:scaleX(0.9529);transform-origin:0 0;-webkit-text-stroke:0.35px;">COPAY</span>
<span style="left:613.5px;top:469.0px;font:normal 13px/17px 'Liberation Sans', sans-serif;color:#800000;transform:scaleX(0.8985);transform-origin:0 0;">28</span>
<span style="left:655.5px;top:469.0px;font:normal 13px/17px 'Liberation Sans', sans-serif;color:#800000;transform:scaleX(0.8985);transform-origin:0 0;">32</span>
<span style="left:609px;top:481.0px;font:bold 13px/17px 'Liberation Sans', sans-serif;color:#000080;transform:scaleX(0.9228);transform-origin:0 0;-webkit-text-stroke:0.35px;">DAW</span>
<span style="left:642px;top:481.0px;font:bold 13px/17px 'Liberation Sans', sans-serif;color:#000080;transform:scaleX(0.9300);transform-origin:0 0;-webkit-text-stroke:0.35px;">ORIGIN</span>
<span style="left:32.5px;top:498.0px;font:bold 13px/17px 'Liberation Sans', sans-serif;color:#000080;transform:scaleX(0.8196);transform-origin:0 0;-webkit-text-stroke:0.35px;">Curr</span>
<span style="left:32.5px;top:522.0px;font:bold 13px/17px 'Liberation Sans', sans-serif;color:#000080;transform:scaleX(0.9042);transform-origin:0 0;-webkit-text-stroke:0.35px;">Prev</span>
<span style="left:106.9px;top:498.0px;font:bold 13.29px/17px 'DejaVu Sans Mono', 'Liberation Mono', monospace;color:#000;transform:scaleX(0.9754);transform-origin:0 0;">64.83</span>
<span style="left:114.9px;top:522.0px;font:bold 13.29px/17px 'DejaVu Sans Mono', 'Liberation Mono', monospace;color:#000;transform:scaleX(0.9692);transform-origin:0 0;">0.00</span>
<span style="left:202.4px;top:498.0px;font:bold 13.29px/17px 'DejaVu Sans Mono', 'Liberation Mono', monospace;color:#000;transform:scaleX(0.9692);transform-origin:0 0;">8.00</span>
<span style="left:202.4px;top:522.0px;font:bold 13.29px/17px 'DejaVu Sans Mono', 'Liberation Mono', monospace;color:#000;transform:scaleX(0.9692);transform-origin:0 0;">0.00</span>
<span style="left:290.4px;top:498.0px;font:bold 13.29px/17px 'DejaVu Sans Mono', 'Liberation Mono', monospace;color:#000;transform:scaleX(0.9692);transform-origin:0 0;">0.00</span>
<span style="left:290.4px;top:522.0px;font:bold 13.29px/17px 'DejaVu Sans Mono', 'Liberation Mono', monospace;color:#000;transform:scaleX(0.9692);transform-origin:0 0;">0.00</span>
<span style="left:380.4px;top:498.0px;font:bold 13.29px/17px 'DejaVu Sans Mono', 'Liberation Mono', monospace;color:#000;transform:scaleX(0.9692);transform-origin:0 0;">0.00</span>
<span style="left:380.4px;top:522.0px;font:bold 13.29px/17px 'DejaVu Sans Mono', 'Liberation Mono', monospace;color:#000;transform:scaleX(0.9692);transform-origin:0 0;">0.00</span>
<span style="left:468.4px;top:498.0px;font:bold 13.29px/17px 'DejaVu Sans Mono', 'Liberation Mono', monospace;color:#000;transform:scaleX(0.9754);transform-origin:0 0;">72.83</span>
<span style="left:476.4px;top:522.0px;font:bold 13.29px/17px 'DejaVu Sans Mono', 'Liberation Mono', monospace;color:#000;transform:scaleX(0.9692);transform-origin:0 0;">0.00</span>
<span style="left:563.9px;top:498.0px;font:bold 13.29px/17px 'DejaVu Sans Mono', 'Liberation Mono', monospace;color:#000;transform:scaleX(0.9692);transform-origin:0 0;">0.00</span>
<span style="left:563.9px;top:522.0px;font:bold 13.29px/17px 'DejaVu Sans Mono', 'Liberation Mono', monospace;color:#000;transform:scaleX(0.9692);transform-origin:0 0;">0.00</span>
<span style="left:617.5px;top:498.0px;font:bold 13.29px/17px 'DejaVu Sans Mono', 'Liberation Mono', monospace;color:#000;">0</span>
<span style="left:659.5px;top:498.0px;font:normal 13px/17px 'Liberation Sans', sans-serif;color:#000;">2</span>
<span style="left:695px;top:480.5px;font:bold 13px/17px 'Liberation Sans', sans-serif;color:#000;transform:scaleX(0.9144);transform-origin:0 0;-webkit-text-stroke:0.35px;">LINE TO CHANGE</span>
<span style="left:639px;top:522.0px;font:bold 13px/17px 'Liberation Sans', sans-serif;color:#808080;transform:scaleX(0.9231);transform-origin:0 0;-webkit-text-stroke:0.35px;">RPh</span>
<span style="left:666.5px;top:522.0px;font:bold 13px/17px 'Liberation Sans', sans-serif;color:#000;transform:scaleX(0.9610);transform-origin:0 0;-webkit-text-stroke:0.35px;">NH3</span>
<span style="left:718px;top:522.0px;font:bold 13px/17px 'Liberation Sans', sans-serif;color:#808080;transform:scaleX(0.9187);transform-origin:0 0;-webkit-text-stroke:0.35px;">Tech</span>
<span style="left:755px;top:522.0px;font:bold 13px/17px 'Liberation Sans', sans-serif;color:#000;transform:scaleX(0.8612);transform-origin:0 0;-webkit-text-stroke:0.35px;">RMB</span>
<span style="left:640.5px;top:539.0px;font:bold 13px/17px 'Liberation Sans', sans-serif;color:#808080;transform:scaleX(0.8416);transform-origin:0 0;-webkit-text-stroke:0.35px;">Orig</span>
<span style="left:666.5px;top:539.0px;font:bold 13px/17px 'Liberation Sans', sans-serif;color:#808080;transform:scaleX(0.9610);transform-origin:0 0;-webkit-text-stroke:0.35px;">NH3</span>
<span style="left:755px;top:539.0px;font:bold 13px/17px 'Liberation Sans', sans-serif;color:#808080;transform:scaleX(0.8612);transform-origin:0 0;-webkit-text-stroke:0.35px;">RMB</span>
<span style="left:29px;top:547.5px;font:bold 13px/17px 'Liberation Sans', sans-serif;color:#800000;transform:scaleX(0.8850);transform-origin:0 0;-webkit-text-stroke:0.35px;">29.</span>
<span style="left:47px;top:547.5px;font:bold 13px/17px 'Liberation Sans', sans-serif;color:#000080;transform:scaleX(0.9312);transform-origin:0 0;-webkit-text-stroke:0.35px;text-decoration:underline;">Qty. Auth.</span>
<span style="left:56px;top:562.0px;font:bold 13px/17px 'Liberation Sans', sans-serif;color:#000;transform:scaleX(0.9681);transform-origin:0 0;-webkit-text-stroke:0.35px;-webkit-text-stroke:0;">168.000</span>
<span style="left:114.5px;top:547.5px;font:bold 13px/17px 'Liberation Sans', sans-serif;color:#800000;transform:scaleX(0.8850);transform-origin:0 0;-webkit-text-stroke:0.35px;">35.</span>
<span style="left:134.5px;top:547.5px;font:bold 13px/17px 'Liberation Sans', sans-serif;color:#000080;transform:scaleX(0.9023);transform-origin:0 0;-webkit-text-stroke:0.35px;text-decoration:underline;">Qty Rem.</span>
<span style="left:142px;top:562.0px;font:bold 13px/17px 'Liberation Sans', sans-serif;color:#000;transform:scaleX(0.9574);transform-origin:0 0;-webkit-text-stroke:0.35px;-webkit-text-stroke:0;">140.000</span>
<span style="left:208px;top:547.5px;font:bold 13px/17px 'Liberation Sans', sans-serif;color:#000080;transform:scaleX(0.9203);transform-origin:0 0;-webkit-text-stroke:0.35px;text-decoration:underline;">Auth. Rfls</span>
<span style="left:233px;top:562.0px;font:bold 13px/17px 'Liberation Sans', sans-serif;color:#000;-webkit-text-stroke:0.35px;-webkit-text-stroke:0;">5</span>
<span style="left:278px;top:547.5px;font:bold 13px/17px 'Liberation Sans', sans-serif;color:#000080;transform:scaleX(0.9498);transform-origin:0 0;-webkit-text-stroke:0.35px;text-decoration:underline;">Quan P/Fill</span>
<span style="left:303.5px;top:562.0px;font:bold 13px/17px 'Liberation Sans', sans-serif;color:#000;transform:scaleX(0.9807);transform-origin:0 0;-webkit-text-stroke:0.35px;-webkit-text-stroke:0;">28.000</span>
<span style="left:15px;top:589.8px;font:bold 13px/17px 'Liberation Sans', sans-serif;color:#800000;transform:scaleX(0.9022);transform-origin:0 0;-webkit-text-stroke:0.35px;">F2-Patient</span>
<span style="left:85px;top:589.8px;font:bold 13px/17px 'Liberation Sans', sans-serif;color:#008000;transform:scaleX(0.9073);transform-origin:0 0;-webkit-text-stroke:0.35px;">F3-Doctor</span>
<span style="left:161px;top:589.8px;font:bold 13px/17px 'Liberation Sans', sans-serif;color:#008080;transform:scaleX(0.8828);transform-origin:0 0;-webkit-text-stroke:0.35px;">F4-Drug</span>
<span style="left:235px;top:589.8px;font:bold 13px/17px 'Liberation Sans', sans-serif;color:#a0a0a0;transform:scaleX(0.8808);transform-origin:0 0;-webkit-text-stroke:0.35px;text-shadow:1px 1px 0 #fff;">F5-Sig</span>
<span style="left:302.7px;top:589.8px;font:bold 13px/17px 'Liberation Sans', sans-serif;color:#000;transform:scaleX(0.9121);transform-origin:0 0;-webkit-text-stroke:0.35px;">F6-Void</span>
<span style="left:372px;top:589.8px;font:bold 13px/17px 'Liberation Sans', sans-serif;color:#800000;transform:scaleX(0.9033);transform-origin:0 0;-webkit-text-stroke:0.35px;">F7-Label</span>
<span style="left:439.7px;top:589.8px;font:bold 13px/17px 'Liberation Sans', sans-serif;color:#000080;transform:scaleX(0.8888);transform-origin:0 0;-webkit-text-stroke:0.35px;">F8-Profile</span>
<span style="left:512.7px;top:589.8px;font:bold 13px/17px 'Liberation Sans', sans-serif;color:#800080;transform:scaleX(0.8917);transform-origin:0 0;-webkit-text-stroke:0.35px;">F9-Notes</span>
<span style="left:584.7px;top:589.8px;font:bold 13px/17px 'Liberation Sans', sans-serif;color:#000;transform:scaleX(0.9151);transform-origin:0 0;-webkit-text-stroke:0.35px;">F12-Splr</span>
<span style="left:650.7px;top:589.8px;font:bold 13px/17px 'Liberation Sans', sans-serif;color:#000;transform:scaleX(0.9188);transform-origin:0 0;-webkit-text-stroke:0.35px;">Shft-S Status</span>
<span style="left:740.7px;top:589.8px;font:bold 13px/17px 'Liberation Sans', sans-serif;color:#a8002c;transform:scaleX(0.8888);transform-origin:0 0;-webkit-text-stroke:0.35px;">[Esc]-Exit</span>
<span style="left:346px;top:178.0px;font:normal 15px/19px 'Liberation Sans', sans-serif;color:#2c3946;transform:scaleX(0.9769);transform-origin:0 0;z-index:11;">Void Event Tracker</span>
<span style="left:279.5px;top:223.0px;font:normal 12px/16px 'Liberation Sans', sans-serif;color:#000;transform:scaleX(0.8892);transform-origin:0 0;z-index:11;">Select the option that best describes why you want to</span>
<span style="left:279.5px;top:236.0px;font:normal 12px/16px 'Liberation Sans', sans-serif;color:#000;transform:scaleX(0.8768);transform-origin:0 0;z-index:11;">void this transaction</span>
<span style="left:279.5px;top:265.6px;font:normal 12px/16px 'Liberation Sans', sans-serif;color:#000;transform:scaleX(0.8501);transform-origin:0 0;z-index:11;">Reason:</span>
<span style="left:283px;top:284.5px;font:normal 12px/16px 'Liberation Sans', sans-serif;color:#000;transform:scaleX(0.8329);transform-origin:0 0;z-index:11;">Other</span>
<span style="left:282.0px;top:302.9px;font:normal 12px/16px 'Liberation Sans', sans-serif;color:#fff;transform:scaleX(0.8329);transform-origin:0 0;z-index:11;">Other</span>
<span style="left:282.0px;top:315.9px;font:normal 12px/16px 'Liberation Sans', sans-serif;color:#000;transform:scaleX(0.8664);transform-origin:0 0;z-index:11;">Insurance Eligibility</span>
<span style="left:282.0px;top:328.9px;font:normal 12px/16px 'Liberation Sans', sans-serif;color:#000;transform:scaleX(0.8972);transform-origin:0 0;z-index:11;">Insurance Update</span>
<span style="left:282.0px;top:341.9px;font:normal 12px/16px 'Liberation Sans', sans-serif;color:#000;transform:scaleX(0.8785);transform-origin:0 0;z-index:11;">Needed Prior Authorization</span>
<span style="left:282.0px;top:354.9px;font:normal 12px/16px 'Liberation Sans', sans-serif;color:#000;transform:scaleX(0.9196);transform-origin:0 0;z-index:11;">Refill Too Soon/DUR</span>
<span style="left:282.0px;top:367.9px;font:normal 12px/16px 'Liberation Sans', sans-serif;color:#000;transform:scaleX(0.8927);transform-origin:0 0;z-index:11;">Renewing Script</span>
<span style="left:282.0px;top:380.9px;font:normal 12px/16px 'Liberation Sans', sans-serif;color:#000;transform:scaleX(0.8946);transform-origin:0 0;z-index:11;">Return to Stock</span>
<span style="left:282.0px;top:393.9px;font:normal 12px/16px 'Liberation Sans', sans-serif;color:#000;transform:scaleX(0.8968);transform-origin:0 0;z-index:11;">Wrong Patient</span>
<span style="left:525px;top:413.0px;font:normal 12px/16px 'Liberation Sans', sans-serif;color:#a0a0a0;transform:scaleX(0.8072);transform-origin:0 0;z-index:11;text-shadow:1px 1px 0 #fff;">OK</span>
</div>
</body></html>
